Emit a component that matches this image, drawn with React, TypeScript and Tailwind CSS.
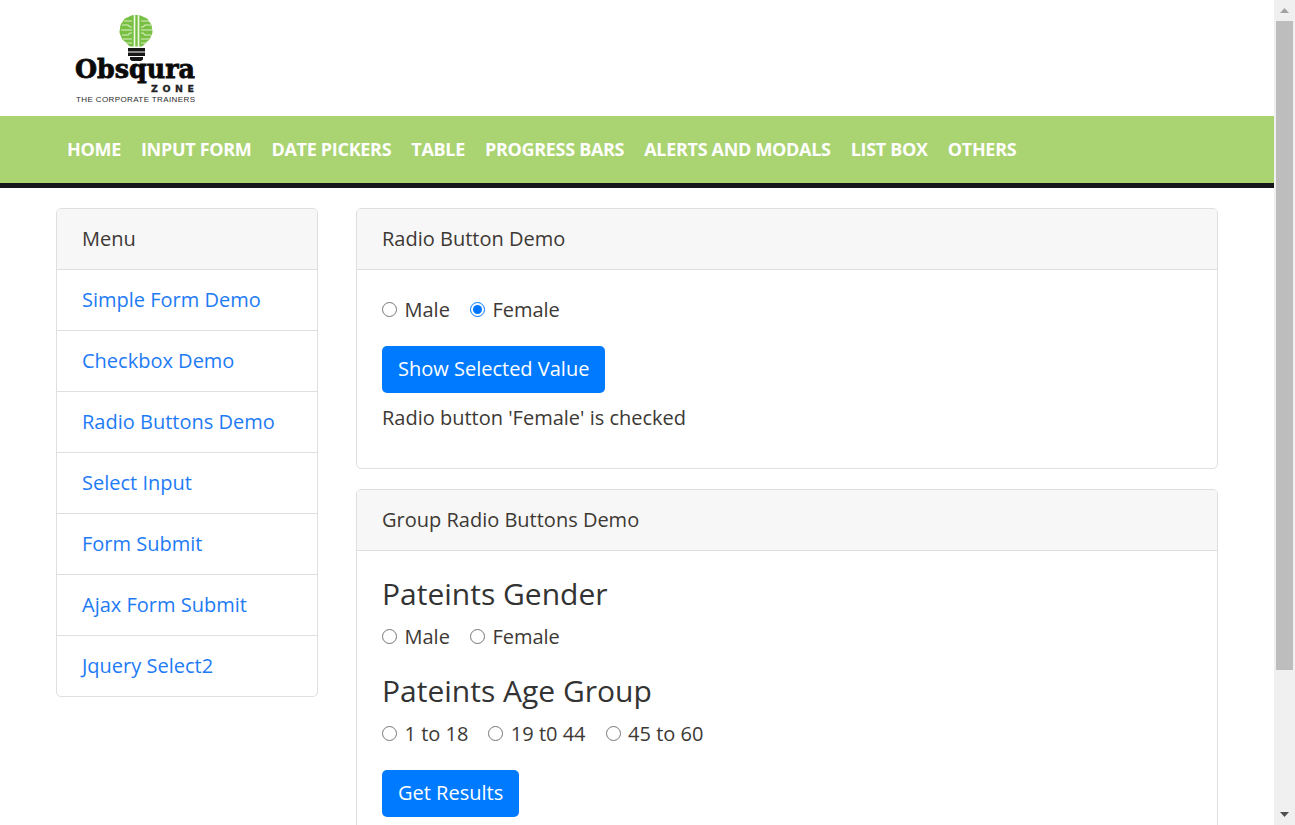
import React from 'react';

const navItems = ['HOME', 'INPUT FORM', 'DATE PICKERS', 'TABLE', 'PROGRESS BARS', 'ALERTS AND MODALS', 'LIST BOX', 'OTHERS'];
const menuItems = ['Simple Form Demo', 'Checkbox Demo', 'Radio Buttons Demo', 'Select Input', 'Form Submit', 'Ajax Form Submit', 'Jquery Select2'];

const Logo = () => (
  <svg width="125" height="92" viewBox="0 0 125 92" className="block">
    {/* bulb */}
    <path d="M62.500 1c3 0 5 .5 7 2 3 .5 5 2.500 6 5 2 2 2.500 4.500 2.500 7 1 2.500.5 5-1 7-.5 2.500-2 4.500-4.500 6-1 1.500-2.500 3-4.500 4.500h-12c-2-1.500-3.500-3-4.500-4.500-2.500-1.500-4-3.500-4.500-6-1.500-2-2-4.500-1-7 0-2.500.5-5 2.500-7 1-2.500 3-4.500 6-5 2-1.500 4-2 7-2z" fill="#78c043" />
    <path d="M60.500 1v32M64.500 1v32" stroke="#f0f8e6" strokeWidth="1.600" />
    <path d="M50 7h8M48 11h6l2 2h2M47 16h11M48 21h6l2-2h2M49 25h9M52 29h6M75 7h-8M77 11h-6l-2 2h-2M78 16h-11M77 21h-6l-2-2h-2M76 25h-9M73 29h-6" stroke="#d9eec2" strokeWidth="1.100" fill="none" />
    {/* socket */}
    <path d="M54 34h17v3.500H54zM54 38.500h17V42H54zM56 43h13v2.500l-2 1.500h-9l-2-1.500z" fill="#161616" />
    <text x="1" y="64" fontFamily="'DejaVu Serif', serif" fontWeight="900" fontSize="26" textLength="120" lengthAdjust="spacingAndGlyphs" fill="#0a0a0a" stroke="#0a0a0a" strokeWidth="0.8">Obsqura</text>
    <text x="77" y="78" fontFamily="'DejaVu Sans', sans-serif" fontWeight="700" fontSize="9.500" textLength="43" fill="#222" stroke="#222" strokeWidth="0.3">ZONE</text>
    <text x="2" y="88" fontFamily="'Liberation Sans', sans-serif" fontSize="8" textLength="119" lengthAdjust="spacing" fill="#2a2a2a">THE CORPORATE TRAINERS</text>
  </svg>
);

const Radio = ({ label, name, checked }: { label: string; name: string; checked?: boolean }) => (
  <label className="flex items-center">
    <input type="radio" name={name} defaultChecked={checked} className="w-[15px] h-[15px] m-0 mr-[7.5px]" />
    <span>{label}</span>
  </label>
);

const Card = ({ title, children }: { title: string; children: React.ReactNode }) => (
  <div className="border border-[#dfdfdf] rounded-[5px] overflow-hidden bg-white">
    <div className="h-[61px] flex items-center px-[25px] bg-[#f7f7f7] border-b border-[#dfdfdf]">{title}</div>
    <div className="px-[25px]">{children}</div>
  </div>
);

const Btn = ({ children }: { children: React.ReactNode }) => (
  <button className="h-[47px] px-4 pb-[2px] bg-[#007bff] text-white rounded-[5px] text-[20px]">{children}</button>
);

export default function App() {
  return (
    <div className="flex h-[825px] overflow-hidden bg-white text-[20px] text-[#3d3935]" style={{ fontFamily: "'Open Sans', sans-serif" }}>
      <div className="flex-1 min-w-0">
        {/* Logo */}
        <div className="h-[116px] pl-[74px] pt-[14px]">
          <Logo />
        </div>

        {/* Nav */}
        <nav className="h-[72px] bg-[#aad372] border-b-[5px] border-[#14161c] flex items-center pl-[67px] gap-[20px]">
          {navItems.map((item) => (
            <a key={item} className="text-white font-bold text-[18px] tracking-[-0.31px]">{item}</a>
          ))}
        </nav>

        <div className="flex gap-[38px] px-[56px] pt-[20px] items-start">
          {/* Sidebar */}
          <aside className="w-[262px] shrink-0 border border-[#dfdfdf] rounded-[5px] overflow-hidden">
            <div className="h-[60px] flex items-center px-[25px] bg-[#f7f7f7]">Menu</div>
            {menuItems.map((item) => (
              <a key={item} className="h-[61px] flex items-center px-[25px] border-t border-[#dfdfdf] text-[#1e7bf5]">{item}</a>
            ))}
          </aside>

          {/* Main */}
          <main className="flex-1 min-w-0 flex flex-col gap-[20px]">
            <Card title="Radio Button Demo">
              <div className="h-[198px] pt-[26px]">
                <div className="flex gap-[20px] h-[27px] items-center">
                  <Radio label="Male" name="gender" />
                  <Radio label="Female" name="gender" checked />
                </div>
                <div className="mt-[23px]"><Btn>Show Selected Value</Btn></div>
                <p className="mt-[10px]">Radio button 'Female' is checked</p>
              </div>
            </Card>
            <Card title="Group Radio Buttons Demo">
              <div className="pt-[23px] pb-[20px]">
                <h4 className="text-[30px] leading-[40px] text-[#333]">Pateints Gender</h4>
                <div className="flex gap-[20px] h-[27px] items-center mt-[9px]">
                  <Radio label="Male" name="pgender" />
                  <Radio label="Female" name="pgender" />
                </div>
                <h4 className="text-[30px] leading-[40px] text-[#333] mt-[21px]">Pateints Age Group</h4>
                <div className="flex gap-[20px] h-[27px] items-center mt-[9px]">
                  <Radio label="1 to 18" name="age" />
                  <Radio label="19 t0 44" name="age" />
                  <Radio label="45 to 60" name="age" />
                </div>
                <div className="mt-[23px]"><Btn>Get Results</Btn></div>
              </div>
            </Card>
          </main>
        </div>
      </div>

      {/* Scrollbar */}
      <div className="w-[21px] shrink-0 bg-[#f0f0f0] flex flex-col items-center">
        <div className="h-[21px] flex items-center justify-center">
          <svg width="9" height="5" viewBox="0 0 9 5"><path d="M4.5 0L9 5H0z" fill="#a3a3a3" /></svg>
        </div>
        <div className="w-[17px] h-[649px] bg-[#bdbdbd]" />
        <div className="flex-1" />
        <div className="h-[21px] flex items-center justify-center">
          <svg width="9" height="5" viewBox="0 0 9 5"><path d="M0 0h9L4.5 5z" fill="#505050" /></svg>
        </div>
      </div>
    </div>
  );
}
